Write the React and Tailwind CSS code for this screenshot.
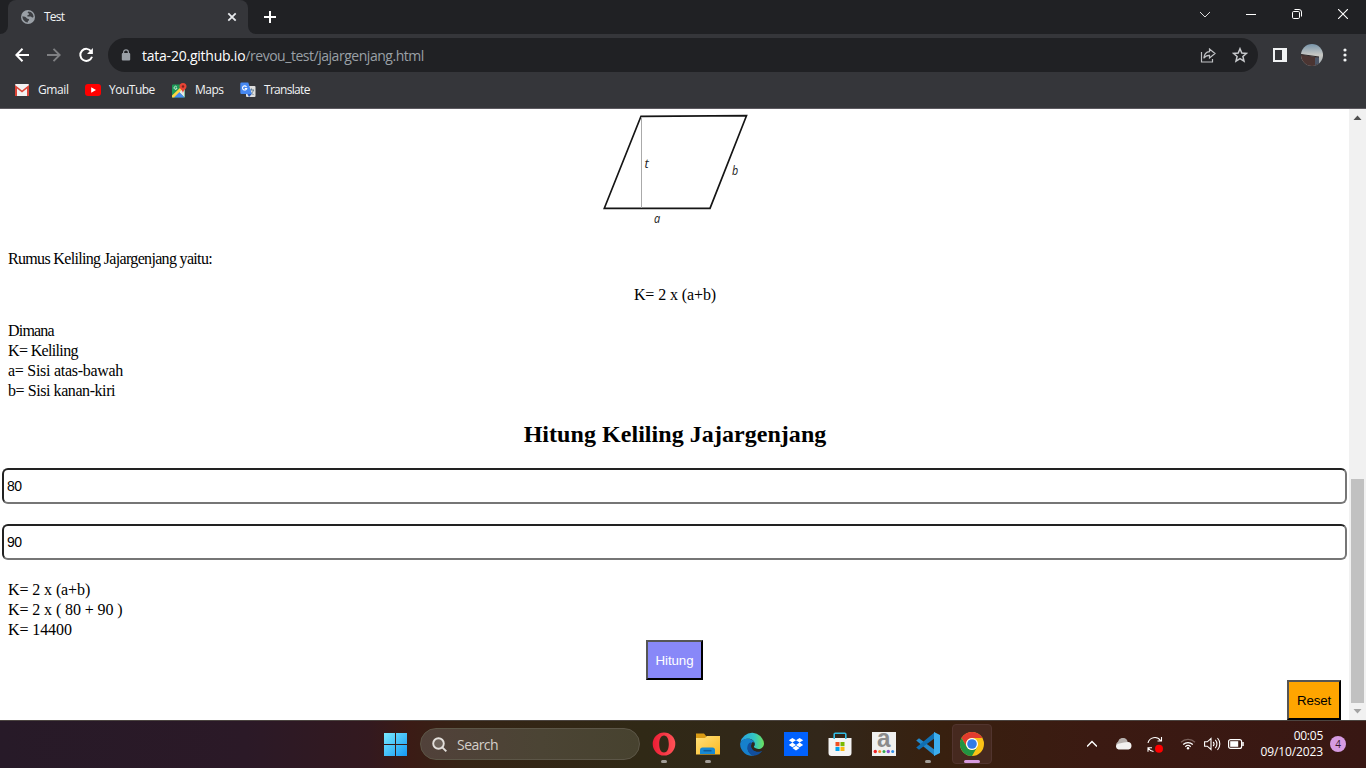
const ui = "font-['Open_Sans','Noto_Sans',sans-serif]";
const serif = "font-['Liberation_Serif',serif]";

function TabStrip() {
  return (
    <div className="flex h-[34px] bg-[#202124]">
      <div className="flex w-2 items-end bg-[#35363a]"><div className="h-full w-2 rounded-br-lg bg-[#202124]" /></div>
      <div className="flex w-60 items-center rounded-t-lg bg-[#35363a] pl-[13px] pr-[11px]">
        <svg width="14" height="14" viewBox="0 0 14 14">
          <circle cx="7" cy="7" r="7" fill="#9aa0a6" />
          <path d="M7.500 1.600C6.500 2 6.300 3 7.300 3.300c1 .3 1 1.300 0 1.600-1.200.3-1.500 1.100-.5 1.500 1.300.4 2.700-.4 3.700.5.800.8 1.600.7 2 .2C12.600 4.300 10.500 1.700 7.500 1.600ZM1.400 6.300c0 3.500 2.500 6 5.400 6.200-.2-1.200.5-1.700 1.200-2.200.5-.6-.2-1.500-1.200-1.500-1.300 0-1.300-1.300-2.300-1.800-.9-.5-2.100-.2-3.100-.7Z" fill="#3d3f43" />
        </svg>
        <span className="ml-[9px] text-[12px] tracking-[-0.75px] text-[#f1f3f4]">Test</span>
        <svg className="ml-auto" width="10" height="10" viewBox="0 0 10 10" stroke="#e8eaed" strokeWidth="1.800"><path d="M1.300 1.300l7.400 7.400M8.700 1.300L1.300 8.700" /></svg>
      </div>
      <div className="w-2 bg-[#35363a]"><div className="h-full w-2 rounded-bl-lg bg-[#202124]" /></div>
      <svg className="ml-2 mt-[11px]" width="12" height="12" viewBox="0 0 12 12" stroke="#fff" strokeWidth="2"><path d="M6 0v12M0 6h12" /></svg>
      <div className="ml-auto flex h-[29px] items-center">
        <svg className="mr-[35px]" width="12" height="8" viewBox="0 0 12 8" fill="none" stroke="#ddd"><path d="M1 1l5 5 5-5" /></svg>
        <svg className="mr-[36px]" width="10" height="10" viewBox="0 0 10 10" stroke="#fff"><path d="M0 4.500h10" /></svg>
        <svg className="mb-px mr-[36px]" width="10" height="10" viewBox="0 0 10 10" fill="none" stroke="#fff"><rect x=".5" y="2.500" width="7" height="7" rx="1.200" /><path d="M2.500.500h4.500a2.500 2.500 0 0 1 2.500 2.500v4.500" /></svg>
        <svg className="mb-px mr-[18px]" width="10" height="10" viewBox="0 0 10 10" stroke="#fff" strokeWidth="1.100"><path d="M0 0l10 10M10 0L0 10" /></svg>
      </div>
    </div>
  );
}

function Toolbar() {
  return (
    <div className="flex h-[42px] items-center bg-[#35363a]">
      <svg className="ml-[15px]" width="14" height="14" viewBox="0 0 14 14" fill="none" stroke="#fff" strokeWidth="2"><path d="M14 7H1.500M7.500.800L1.300 7l6.200 6.200" /></svg>
      <svg className="ml-[18px]" width="14" height="14" viewBox="0 0 14 14" fill="none" stroke="#7f8083" strokeWidth="1.900"><path d="M0 7h12.500M6.500.800L12.700 7l-6.200 6.200" /></svg>
      <svg className="ml-[17px]" width="16" height="16" viewBox="0 0 16 16"><path d="M13.300 4.500A6 6 0 1 0 14 9.800" fill="none" stroke="#fff" strokeWidth="2" /><path d="M14.900 1v6H9z" fill="#fff" /></svg>
      <div className="ml-[14px] flex h-[34px] w-[1150px] items-center rounded-full bg-[#202124] pl-[13px] pr-[10px]">
        <svg width="10" height="12" viewBox="0 0 10 12"><rect x=".8" y="4" width="8.400" height="7.500" rx="1" fill="#9aa0a6" /><path d="M2.600 5V3.200a2.400 2.400 0 0 1 4.800 0V5" fill="none" stroke="#9aa0a6" strokeWidth="1.200" /></svg>
        <span className="ml-[11px] whitespace-nowrap text-[14px] tracking-[-0.23px] text-white">tata-20.github.io<span className="tracking-[-0.470px] text-[#9aa0a6]">/revou_test/jajargenjang.html</span></span>
        <svg className="ml-auto" width="16" height="15" viewBox="0 0 16 15" fill="none" stroke="#bfc1c4" strokeWidth="1.200"><path d="M1.500 4V14h11v-3M9.500 1L15 5.500 9.500 10V7.300C6.800 7.200 5 8.300 3.800 10.300 4.200 6.400 6 4 9.500 3.700Z" /></svg>
        <svg className="ml-4" width="16" height="16" viewBox="0 0 16 16" fill="none" stroke="#c8cacd" strokeWidth="1.500"><path d="M8 1.700l1.800 4.300 4.700.4-3.600 3.100 1.100 4.600L8 11.600l-4 2.500 1.100-4.600L1.500 6.400l4.700-.4Z" /></svg>
      </div>
      <svg className="ml-[15px]" width="14" height="14" viewBox="0 0 14 14"><rect width="14" height="14" fill="#f1f3f4" /><rect x="2" y="2" width="7" height="10" fill="#35363a" /></svg>
      <svg className="ml-[14px]" width="22" height="22" viewBox="0 0 22 22">
        <defs><clipPath id="face"><circle cx="11" cy="11" r="11" /></clipPath><linearGradient id="sky" x2="0" y2="1"><stop stopColor="#7895aa" /><stop offset=".5" stopColor="#c8c8c4" /><stop offset="1" stopColor="#9aa6ac" /></linearGradient></defs>
        <g clipPath="url(#face)"><rect width="22" height="22" fill="url(#sky)" /><path d="M0 10.500l18 3v9H0Z" fill="#4b3532" /><path d="M14 13.500l4-.5v7l-4 1Z" fill="#4b5566" /><path d="M0 10.500l18 2.500" stroke="#2d2829" /></g>
      </svg>
      <svg className="ml-[20px]" width="4" height="14" viewBox="0 0 4 14" fill="#f1f3f4"><circle cx="2" cy="2" r="1.600" /><circle cx="2" cy="7" r="1.600" /><circle cx="2" cy="12" r="1.600" /></svg>
    </div>
  );
}

function Bookmarks() {
  const text = "text-[12px] text-[#f1f3f4] whitespace-nowrap";
  return (
    <div className="flex h-[33px] items-center border-b border-[#5d5a60] bg-[#35363a] pb-1">
      <svg className="ml-[15px]" width="14" height="12" viewBox="0 0 14 12"><rect width="14" height="12" rx="1" fill="#f2f2f2" /><path d="M0 12V1l7 5.500L14 1v11h-2V4.500L7 8.500 2 4.500V12Z" fill="#dc4437" /></svg>
      <span className={`ml-[9px] w-[31px] tracking-[-0.4px] ${text}`}>Gmail</span>
      <svg className="ml-[16px]" width="16" height="12" viewBox="0 0 16 12"><rect width="16" height="12" rx="3" fill="#f00" /><path d="M6.200 3.300v5.400L11 6Z" fill="#fff" /></svg>
      <span className={`ml-[8px] w-[46px] tracking-[-0.5px] ${text}`}>YouTube</span>
      <svg className="ml-[17px]" width="15" height="15" viewBox="0 0 15 15"><rect y="1.500" width="13" height="13" rx="1" fill="#1c9957" /><path d="M6.500 8.500L12.500 4v10.500Z" fill="#e8e8e8" /><path d="M1.500 14.500L7 9l5.500 5.500Z" fill="#4688f1" /><path d="M0 12.500L9 4l1.800 1.800L2 14.500H0Z" fill="#fdd445" /><path d="M4.800 4A1.500 1.500 0 1 0 5 5.200H3.700" fill="none" stroke="#d8f0e2" strokeWidth=".9" /><path d="M11 0a3.500 3.500 0 0 1 3.500 3.500c0 2.500-3 3.500-3.500 6.500-.5-3-3.500-4-3.500-6.500A3.500 3.500 0 0 1 11 0Z" fill="#e84435" /><circle cx="11" cy="3.500" r="1.200" fill="#7b231e" /></svg>
      <span className={`ml-[8px] w-[29px] tracking-[-0.5px] ${text}`}>Maps</span>
      <svg className="ml-[16px]" width="16" height="16" viewBox="0 0 16 16"><rect x="6" y="4" width="9.500" height="11" rx="1" fill="#dedede" /><path d="M9 8h5M11.500 6.500V8M13.500 8c-.5 2-2 3.500-3.500 4.500M10 9.500c.8 1.500 2 2.500 3.500 3" stroke="#68808d" fill="none" /><path d="M1.500.500h6.800l3.500 11.500H1.500A1.200 1.200 0 0 1 .3 10.800V1.700A1.200 1.200 0 0 1 1.500.500Z" fill="#4688f1" /><path d="M7.400 12h4.400L9 15Z" fill="#2858b8" /><path d="M6.500 4.900A2.100 2.100 0 1 0 6.700 6.500H4.800" fill="none" stroke="#fff" strokeWidth="1.100" /></svg>
      <span className={`ml-[8px] tracking-[-0.7px] ${text}`}>Translate</span>
    </div>
  );
}

function PageContent() {
  const field = "h-9 w-full rounded-[6px] border-2 border-t-[#222] border-l-[#222] border-r-[#767676] border-b-[#767676] bg-white px-[3px] font-['Liberation_Sans',sans-serif] text-[14px] tracking-[-0.6px] text-black outline-none";
  return (
    <div className={`flex w-[1349px] flex-col text-[16px] leading-5 tracking-[-0.22px] text-black ${serif}`}>
      <svg className="ml-[595px] block" width="160" height="124" viewBox="595 109 160 124">
        <path d="M641 116.300L746.500 115.700 710 208.300H604.300Z" fill="none" stroke="#151515" strokeWidth="1.700" />
        <path d="M641.500 117v91" stroke="#aaa" />
        <g className="font-['Open_Sans',sans-serif] italic" fontSize="13" fill="#222"><text x="644.500" y="167.500" textLength="4" lengthAdjust="spacingAndGlyphs">t</text><text x="732" y="174.500" textLength="6" lengthAdjust="spacingAndGlyphs">b</text><text x="654" y="222.500" textLength="6" lengthAdjust="spacingAndGlyphs">a</text></g>
      </svg>
      <p className="mt-4 pl-2 tracking-[-0.670px]">Rumus Keliling Jajargenjang yaitu:</p>
      <p className="mt-4 pl-[1px] text-center tracking-[-0.1px]">K= 2 x (a+b)</p>
      <div className="mt-4 pl-2">
        <p className="tracking-[-0.8px]">Dimana</p>
        <p className="tracking-[-0.650px]">K= Keliling</p>
        <p className="tracking-[-0.280px]">a= Sisi atas-bawah</p>
        <p className="tracking-[-0.430px]">b= Sisi kanan-kiri</p>
      </div>
      <h2 className="mt-[19px] h-[28px] pl-[1px] text-center text-[24px] font-bold leading-[28px] tracking-[0.05px]">Hitung Keliling Jajargenjang</h2>
      <div className="mt-[20px] flex flex-col gap-5 pl-[2px] pr-[2px]">
        <input className={field} defaultValue="80" />
        <input className={field} defaultValue="90" />
      </div>
      <p className="mt-5 pl-2 tracking-[-0.1px]">K= 2 x (a+b)<br />K= 2 x ( 80 + 90 )<br />K= 14400</p>
      <button className="ml-[646px] h-10 w-[57px] border-2 border-t-[#555] border-l-[#555] border-r-black border-b-black bg-[#8888f8] pt-[2px] font-['Liberation_Sans',sans-serif] text-[13.330px] tracking-[-0.1px] text-white">Hitung</button>
      <button className="ml-[1287px] h-10 w-[54px] border-2 border-t-[#555] border-l-[#555] border-r-black border-b-black bg-[orange] pt-[2px] font-['Liberation_Sans',sans-serif] text-[13.330px] tracking-[-0.2px] text-black">Reset</button>
    </div>
  );
}

function Scrollbar() {
  return (
    <div className="flex w-[17px] flex-col bg-[#f1f1f1]">
      <svg width="17" height="17" viewBox="0 0 17 17"><path d="M4.500 11h8l-4-4.500Z" fill="#505050" /></svg>
      <div className="mx-[2px] mt-[353px] h-[224px] w-[13px] bg-[#c1c1c1]" />
      <svg width="17" height="17" viewBox="0 0 17 17"><path d="M4.500 6h8l-4 4.500Z" fill="#a3a3a3" /></svg>
    </div>
  );
}

function AppSlot({ children, mark }) {
  return (
    <div className="flex h-10 w-10 flex-col items-center pt-2">
      {children}
      <div className={`mt-[4px] h-[3px] w-[6px] rounded-full ${mark ? "bg-[#a29d97]" : ""}`} />
    </div>
  );
}

function Taskbar() {
  return (
    <div className="flex h-12 items-center border-t border-[#4b4440] bg-[linear-gradient(90deg,#271a28_0%,#2b1927_18%,#33191f_27%,#3b1b15_30%,#352415_34%,#302916_47%,#32271a_60%,#38200f_69%,#3b1a12_80%,#381713_100%)] pb-px">
      <svg className="ml-[384px]" width="23" height="23" viewBox="0 0 23 23"><defs><linearGradient id="win" gradientUnits="userSpaceOnUse" x1="0" y1="0" x2="23" y2="23"><stop stopColor="#78eaff" /><stop offset="1" stopColor="#1498f4" /></linearGradient></defs><path d="M0 0h11v11H0ZM12 0h11v11H12ZM0 12h11v11H0ZM12 12h11v11H12Z" fill="url(#win)" /></svg>
      <div className="ml-[13px] flex h-8 w-[220px] items-center rounded-full border border-[#5c5647] bg-[linear-gradient(90deg,#51413a,#4b4434_55%,#47422f)] pl-[11px]">
        <svg width="15" height="15" viewBox="0 0 15 15" fill="#6d625a" stroke="#e3dfdb" strokeWidth="1.900"><circle cx="6.500" cy="6.500" r="5.300" /><path d="M10.300 10.300l4 4" /></svg>
        <span className="ml-[10px] text-[14px] tracking-[-0.550px] text-[#d4cfca]">Search</span>
      </div>
      <div className="ml-1 flex gap-1">
        <AppSlot mark><svg width="24" height="24" viewBox="0 0 24 24"><defs><linearGradient id="op"><stop stopColor="#ed1c34" /><stop offset="1" stopColor="#ff5357" /></linearGradient></defs><path fillRule="evenodd" d="M12 .500a11.300 11.500 0 1 1 0 23 11.300 11.500 0 1 1 0-23ZM12 3.500c-3 0-4.800 3.500-4.800 8.500s1.800 8.500 4.800 8.500 4.800-3.500 4.800-8.500S15 3.500 12 3.500Z" fill="url(#op)" /></svg></AppSlot>
        <AppSlot mark><svg width="24" height="24" viewBox="0 0 24 24"><defs><linearGradient id="fo" x2="1" y2="1"><stop stopColor="#ffe17b" /><stop offset="1" stopColor="#fbb922" /></linearGradient></defs><path d="M0 1.500h8l2.500 3H22V8H0Z" fill="#d99b14" /><path d="M0 6h9l2-2h13v18.500H0Z" fill="url(#fo)" /><path d="M4 22v-4a2.500 2.500 0 0 1 2.500-2.500h10A2.500 2.500 0 0 1 19 18v4Z" fill="#1789d2" /><path d="M7.500 18.700h8" stroke="#0e5b99" strokeWidth="1.500" /></svg></AppSlot>
        <AppSlot><svg width="24" height="24" viewBox="0 0 24 24"><defs><linearGradient id="eg"><stop stopColor="#269ee4" /><stop offset=".6" stopColor="#33c6c2" /><stop offset="1" stopColor="#6ce25c" /></linearGradient></defs><path d="M.300 10.500A12 12 0 0 1 24 11.500c0 3.500-2.700 5.500-5.700 5.500-2.500 0-4.500-1-4.500-2.200 0-.8.9-1.300.9-2.800C14.700 8.800 11.700 6.700 8.500 6.700c-4 0-7.300 2-8.200 3.800Z" fill="url(#eg)" /><path d="M.100 12C.500 8.500 4 6.700 8 6.700c3.700 0 6.700 2.300 6.700 5.300 0 1.500-.9 2-.9 2.800-3.500-4-7-.5-5.800 3.200 1 3.500 3.500 5 6.500 5.600A12 12 0 0 1 .100 12Z" fill="#1680cc" /><path d="M9.200 11C5.700 14.500 7.500 21 12.500 23.700c4.500.3 8-2 10-5.200-2.500 1.500-7.500 1.500-9.700-1-1.800-2-2-4.500-.5-6.500-1-.8-2.200-.7-3.100 0Z" fill="#114f9e" /><path d="M12.500 10c-2 2.500-1.500 5.500.300 7.500 2.200 2.500 7.200 2.500 9.700 1l.4-1.500c-1.500.5-3 .4-4.600 0-2.500 0-4.500-1-4.500-2.200 0-.8.9-1.300.9-2.800 0-1-.8-1.800-2.200-2Z" fill="#30271a" /></svg></AppSlot>
        <AppSlot><svg width="24" height="24" viewBox="0 0 24 24"><rect width="24" height="24" fill="#0061fe" /><path d="M8.400 6L4.800 8.300l3.600 2.300L12 8.300ZM15.600 6L12 8.300l3.600 2.300 3.600-2.300ZM8.400 10.600l-3.600 2.300 3.600 2.300 3.600-2.300ZM15.600 10.600L12 12.900l3.600 2.300 3.600-2.300ZM12 13.800l-3.600 2.300 3.600 2.300 3.600-2.300Z" fill="#fff" /></svg></AppSlot>
        <AppSlot><svg width="24" height="24" viewBox="0 0 24 24"><path d="M.500 6h23v15a3 3 0 0 1-3 3h-17a3 3 0 0 1-3-3Z" fill="#f4f4f4" /><path d="M6.200 7V2.200a1 1 0 0 1 1-1h9.600a1 1 0 0 1 1 1V7" fill="none" stroke="#32bce4" strokeWidth="1.600" /><path d="M7.500 10H11.500v4.200H7.500Z" fill="#f05022" /><path d="M12.500 10h4v4.200h-4Z" fill="#7ab800" /><path d="M7.500 15H11.500v4H7.500Z" fill="#00a2ed" /><path d="M12.500 15h4v4h-4Z" fill="#fcb811" /></svg></AppSlot>
        <AppSlot><svg className="overflow-visible" width="24" height="24" viewBox="0 0 24 24"><rect width="24" height="24" fill="#f0f0ef" /><text x="5" y="15" fontSize="25" fontWeight="bold" fill="#8b8b8b" textLength="13.500" lengthAdjust="spacingAndGlyphs" className="font-['Liberation_Sans',sans-serif]">a</text><circle cx="3.300" cy="19.500" r="1.700" fill="#ef2024" /><circle cx="7.700" cy="19.500" r="1.500" fill="#f58d28" /><circle cx="12" cy="19.500" r="1.500" fill="#34a853" /><circle cx="16.300" cy="19.500" r="1.700" fill="#884fd0" /><circle cx="20.700" cy="19.500" r="1.500" fill="#308ee8" /></svg></AppSlot>
        <AppSlot mark><svg width="24" height="24" viewBox="0 0 24 24"><path d="M.200 8.500L3 6.300 19 18v6Z" fill="#2489ca" /><path d="M.200 15.500L3 17.700 19 6V0Z" fill="#1070b3" /><path d="M18 0l6 3v18l-6 3Z" fill="#3caeef" /></svg></AppSlot>
        <div className="flex h-10 w-10 flex-col items-center rounded border border-[#51342e] bg-[#46291f] pt-[7px]">
          <svg width="24" height="24" viewBox="0 0 24 24"><circle cx="12" cy="12" r="12" fill="#fbc116" /><path d="M1.600 6A12 12 0 0 1 22.400 6H12a6 6 0 0 0-5.200 9Z" fill="#e33b2e" /><path d="M1.600 6A12 12 0 0 0 12 24l5.200-9A6 6 0 0 1 6.800 15Z" fill="#229342" /><circle cx="12" cy="12" r="6" fill="#fff" /><circle cx="12" cy="12" r="4.800" fill="#337be6" /></svg>
          <div className="mt-[4px] h-[3px] w-4 rounded-full bg-[#d79ade]" />
        </div>
      </div>
      <svg className="ml-[95px]" width="10" height="8" viewBox="0 0 10 8" fill="none" stroke="#fff" strokeWidth="1.500"><path d="M0 6.500l5-5 5 5" /></svg>
      <svg className="ml-[18px]" width="17" height="12" viewBox="0 0 17 12"><path d="M4 10.500A3.700 3.700 0 0 1 3 3.700 5 5 0 0 1 12.500 3L13 9Z" fill="#b6b0ad" /><path d="M3.500 11.500a3 3 0 0 1-.5-5.800L9 4.500l4-.5a3.800 3.800 0 0 1 .5 7.500Z" fill="#f2f1f0" /></svg>
      <svg className="ml-[15px]" width="17" height="17" viewBox="0 0 17 17" fill="none" stroke="#fff" strokeWidth="1.100"><path d="M1 7A7 7 0 0 1 13.500 4.500M14.500 1v4h-4M6.500 15.500C4 15 2.300 13.800 1.500 12.200M1 15.800v-4h4" /><circle cx="12" cy="12.800" r="4" fill="#f00" stroke="none" /></svg>
      <svg className="ml-[16px]" width="16" height="12" viewBox="0 0 16 12" fill="none" strokeWidth="1.200"><path d="M1 4.200a10 10 0 0 1 14 0" stroke="#7c625c" /><path d="M3.200 6.500a7 7 0 0 1 9.600 0M5.300 8.700a4 4 0 0 1 5.400 0" stroke="#fff" /><circle cx="8" cy="10.300" r="1.200" fill="#fff" /></svg>
      <svg className="ml-[8px]" width="17" height="14" viewBox="0 0 17 14" fill="none" stroke="#fff" strokeWidth="1.100"><path d="M.600 4.800h2.700L7 1.500v11L3.300 9.200H.600ZM9.200 4.800a3.500 3.500 0 0 1 0 4.400M11.300 2.900a6 6 0 0 1 0 8.200M13.500 1a9 9 0 0 1 0 12" /></svg>
      <svg className="ml-[7px]" width="16" height="10" viewBox="0 0 16 10"><rect x=".6" y=".6" width="13" height="8.800" rx="2" fill="none" stroke="#fff" strokeWidth="1.200" /><rect x="2.200" y="2.200" width="8" height="5.600" fill="#fff" /><path d="M15 3v4" stroke="#fff" strokeWidth="1.500" /></svg>
      <div className="ml-[13px] w-[66px] text-right text-[12px] leading-4 text-white"><div className="tracking-[-0.250px]">00:05</div><div className="whitespace-nowrap tracking-[-0.120px]">09/10/2023</div></div>
      <div className="ml-[7px] flex h-4 w-4 items-center justify-center rounded-full bg-[#d69be2] text-[10px] leading-none text-[#38182a]">4</div>
    </div>
  );
}

export default function App() {
  return (
    <div className={`flex h-[768px] w-[1366px] flex-col overflow-hidden bg-white ${ui}`}>
      <TabStrip />
      <Toolbar />
      <Bookmarks />
      <div className="flex h-[611px] overflow-hidden bg-white"><PageContent /><Scrollbar /></div>
      <Taskbar />
    </div>
  );
}
